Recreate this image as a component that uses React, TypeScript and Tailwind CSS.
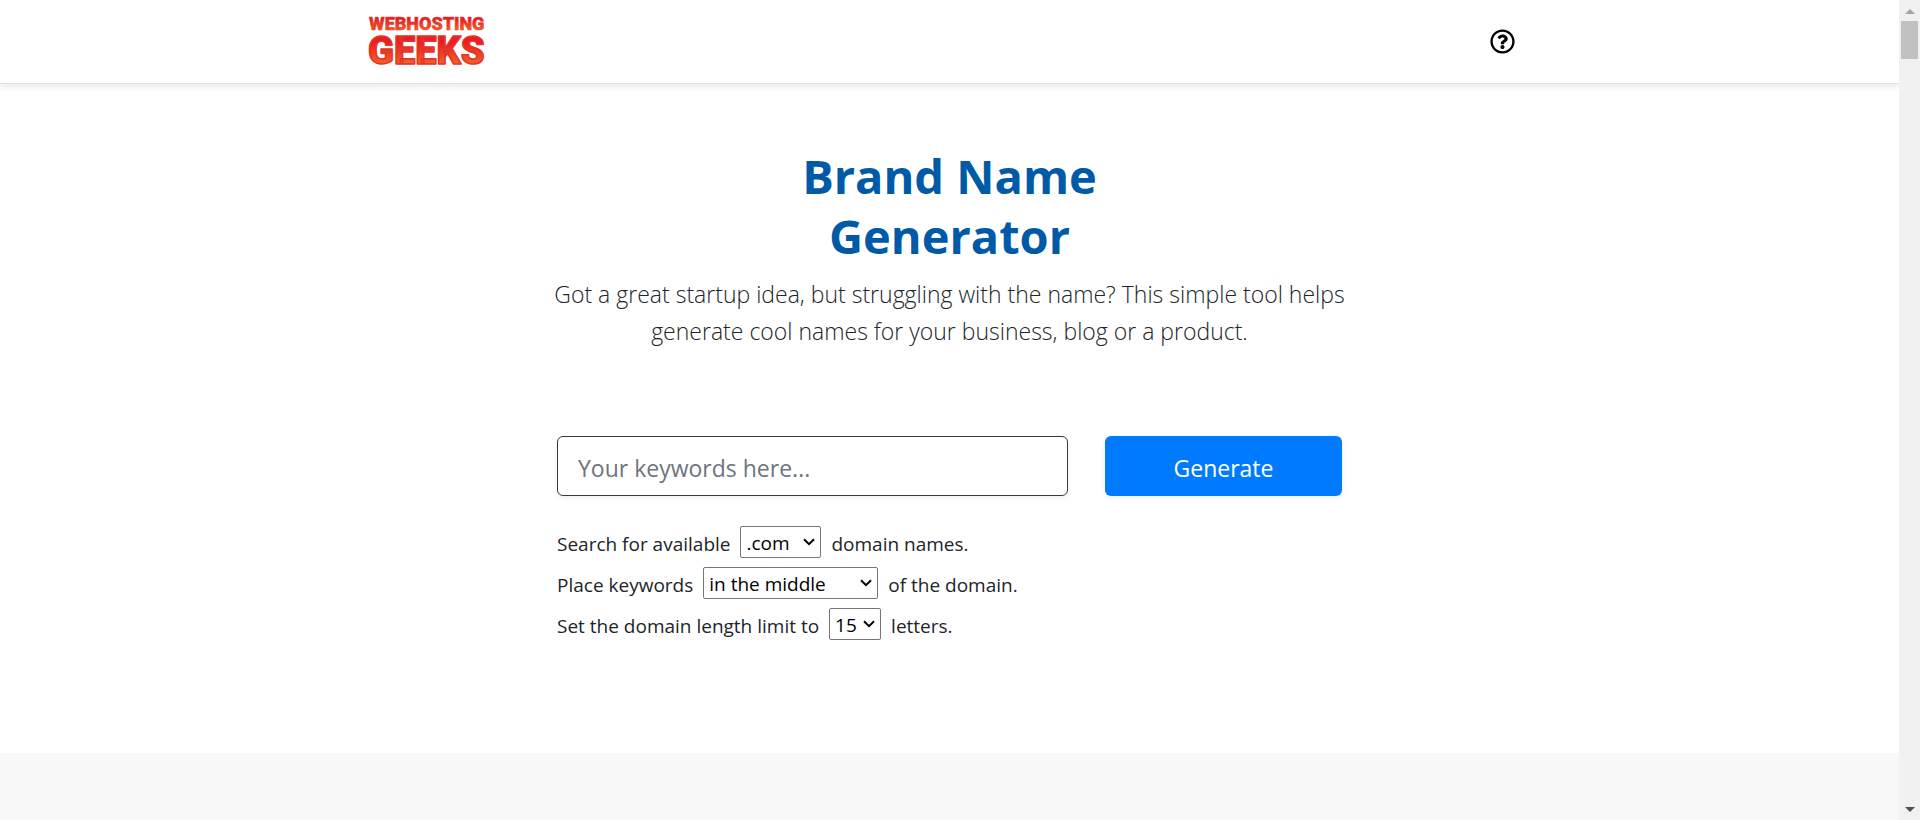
import React, { useState } from 'react';
import { FaRegQuestionCircle } from 'react-icons/fa';

interface OptionSelectProps {
  id: string;
  label: string;
  suffix: string;
  value: string;
  options: string[];
  widthClass: string;
  onChange: (value: string) => void;
}

function OptionSelect({ id, label, suffix, value, options, widthClass, onChange }: OptionSelectProps) {
  return (
    <div className="flex h-8 items-center gap-[10px]">
      <label htmlFor={id} className="pt-1">{label}</label>
      <div className={`relative ${widthClass}`}>
        <select
          id={id}
          value={value}
          onChange={(e) => onChange(e.target.value)}
          className="block h-8 w-full appearance-none rounded-xs border border-[#767676] bg-white pt-[2px] pl-[5px] text-black"
        >
          {options.map((option) => (
            <option key={option}>{option}</option>
          ))}
        </select>
        <svg
          viewBox="0 0 12 8"
          className="pointer-events-none absolute top-3 right-[6px] h-2 w-3"
          fill="none"
          stroke="#000"
          strokeWidth="2"
        >
          <path d="M1 1.2 6 6.2 11 1.2" />
        </svg>
      </div>
      <span className="pt-1">{suffix}</span>
    </div>
  );
}

function Logo() {
  return (
    <a href="/" aria-label="WebHosting Geeks">
      <svg
        viewBox="0 0 120 54"
        className="h-[54px] w-[120px] overflow-visible"
        fontFamily="Roboto, sans-serif"
        fontWeight="900"
      >
        <defs>
          <linearGradient id="logo-fill" x1="0" y1="0" x2="0" y2="1">
            <stop offset="0.3" stopColor="#ed1c24" />
            <stop offset="0.85" stopColor="#f26a21" />
          </linearGradient>
        </defs>
        <g fill="url(#logo-fill)" stroke="#e2352a" strokeLinejoin="round">
          <text x="1" y="15" fontSize="18" strokeWidth="0.5">WEBHOSTING</text>
          <text x="0" y="49" fontSize="38" strokeWidth="1.5">GEEKS</text>
        </g>
      </svg>
    </a>
  );
}

function Header() {
  return (
    <header className="border-b border-[#dee2e6] bg-white shadow-[0_3px_6px_rgba(0,0,0,0.08)]">
      <div className="mx-auto flex h-[83px] max-w-[1163px] items-center justify-between">
        <Logo />
        <button type="button" aria-label="Help" className="px-4 text-black">
          <FaRegQuestionCircle className="h-[25px] w-[25px]" />
        </button>
      </div>
    </header>
  );
}

function Scrollbar() {
  return (
    <div className="flex h-screen w-[21px] shrink-0 flex-col items-center justify-between bg-[#f1f1f1] pt-[9px] pb-2">
      <div className="flex w-full flex-col items-center gap-[7px]">
        <svg viewBox="0 0 10 5" className="h-[5px] w-[10px]">
          <path d="M0 5 5 0l5 5z" fill="#a3a3a3" />
        </svg>
        <div className="h-[38px] w-[17px] bg-[#c1c1c1]" />
      </div>
      <svg viewBox="0 0 10 5" className="h-[5px] w-[10px]">
        <path d="M0 0h10L5 5z" fill="#505050" />
      </svg>
    </div>
  );
}

export default function App() {
  const [keywords, setKeywords] = useState('');
  const [tld, setTld] = useState('.com');
  const [position, setPosition] = useState('in the middle');
  const [limit, setLimit] = useState('15');

  return (
    <div className="flex h-screen overflow-hidden bg-white font-['Open_Sans',sans-serif] text-[#212529]">
      <div className="flex min-w-0 flex-1 flex-col">
        <Header />

        <main className="mx-auto w-full max-w-[825px] px-5 pt-[62px] pb-[113px]">
          <div className="-mx-4 text-center">
            <h1 className="mx-auto max-w-[360px] text-[47px] leading-[60px] font-bold text-[#005aa7]">
              Brand Name Generator
            </h1>
            <p className="mt-[10px] text-[23px] leading-[37px] font-light">
              Got a great startup idea, but struggling with the name? This simple tool helps generate cool names for
              your business, blog or a product.
            </p>
          </div>

          {/* Search form */}
          <form className="mt-[86px]" onSubmit={(e) => e.preventDefault()}>
            <div className="flex gap-[37px]">
              <input
                type="text"
                aria-label="Keywords"
                placeholder="Your keywords here..."
                value={keywords}
                onChange={(e) => setKeywords(e.target.value)}
                className="h-[60px] min-w-0 flex-1 rounded-md border border-[#343a40] px-5 pt-1 text-[23px] shadow-[0_2px_5px_rgba(0,0,0,0.075)] placeholder:text-[#6c757d]"
              />
              <button
                type="submit"
                className="h-[60px] w-[237px] rounded-md bg-[#007bff] pt-1 text-[23px] text-white shadow-[0_2px_5px_rgba(0,0,0,0.075)]"
              >
                Generate
              </button>
            </div>

            <div className="mt-[30px] flex flex-col gap-[9px] text-[19px]">
              <OptionSelect
                id="tld"
                label="Search for available"
                suffix="domain names."
                value={tld}
                options={['.com', '.net', '.org']}
                widthClass="w-[81px]"
                onChange={setTld}
              />
              <OptionSelect
                id="position"
                label="Place keywords"
                suffix="of the domain."
                value={position}
                options={['in the middle', 'at the beginning', 'at the end']}
                widthClass="w-[175px]"
                onChange={setPosition}
              />
              <OptionSelect
                id="limit"
                label="Set the domain length limit to"
                suffix="letters."
                value={limit}
                options={['10', '15', '20']}
                widthClass="w-[52px]"
                onChange={setLimit}
              />
            </div>
          </form>
        </main>

        <section className="flex-1 bg-[#f8f8f8]" />
      </div>
      <Scrollbar />
    </div>
  );
}
